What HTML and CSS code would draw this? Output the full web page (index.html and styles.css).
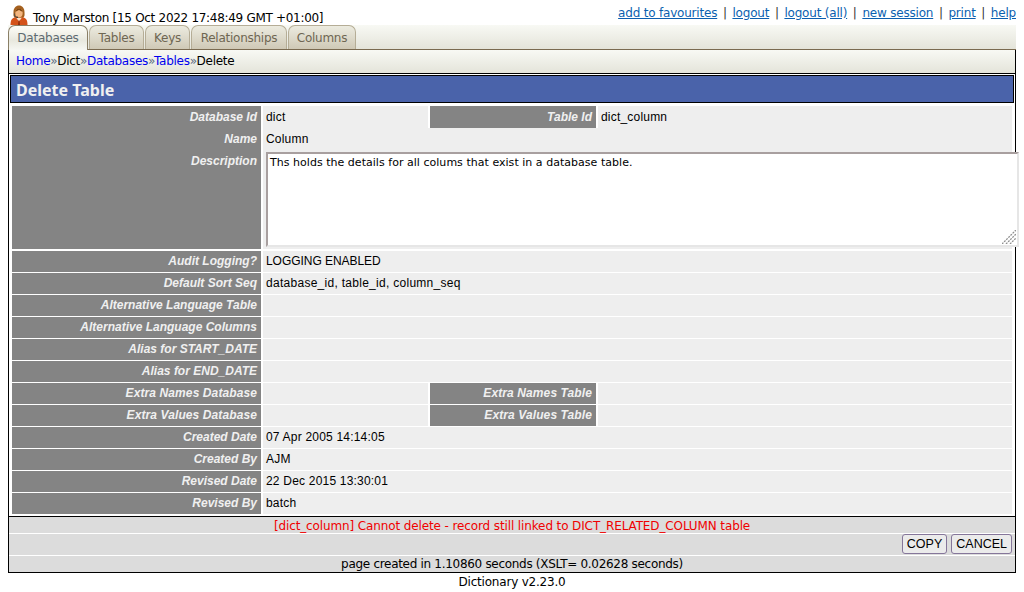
FILE: index.html
```html
<!DOCTYPE html>
<html lang="en">
<head>
<meta charset="utf-8">
<title>Delete Table</title>
<link rel="stylesheet" href="styles.css">
</head>
<body>
<header class="top">
  <div class="user">
    <svg class="avatar" width="18" height="20" viewBox="0 0 18 20">
      <path d="M0.5 20c0-2 .2-4.500 1.500-6 1.500-1.500 4-2.500 7-2.500s5.500 1 7 2.500c1.300 1.500 1.500 4 1.500 6z" fill="#d4531a"/>
      <path d="M6 12.500l3 4 3-4z" fill="#f7e3cc"/>
      <path d="M8.500 15.500h1l.5 4.500h-2z" fill="#8c2c0c"/>
      <path d="M3.500 7c0-4 2.500-6.500 5.500-6.500s5.500 2.500 5.500 6.500c0 2.500.5 4-1 5.500H4.500c-1.500-1.500-1-3-1-5.500z" fill="#a5611f"/>
      <ellipse cx="9" cy="8" rx="3.700" ry="4.300" fill="#f3b680"/>
      <path d="M5.300 7c.5-2.500 2-3.500 3.700-3.500 1.800 0 3.200 1 3.700 3.500-2-1.500-3-1.500-3.700-2-.8.500-2 .5-3.700 2z" fill="#7f4712"/>
      <path d="M4.500 8.500v2.500l2.500 1.500" fill="none" stroke="#55504a" stroke-width="1"/>
      <circle cx="7.300" cy="12.300" r=".8" fill="#35302c"/>
    </svg>
    <span class="user-text">Tony Marston [15 Oct 2022 17:48:49 GMT +01:00]</span>
  </div>
  <nav class="links">
    <a href="#">add to favourites</a><span class="sep">|</span><a href="#">logout</a><span class="sep">|</span><a href="#">logout (all)</a><span class="sep">|</span><a href="#">new session</a><span class="sep">|</span><a href="#">print</a><span class="sep">|</span><a href="#">help</a>
  </nav>
</header>
<nav class="tabs">
  <div class="tab tab-active">Databases</div>
  <div class="tab tab-tables">Tables</div>
  <div class="tab tab-keys">Keys</div>
  <div class="tab tab-rel">Relationships</div>
  <div class="tab tab-cols">Columns</div>
</nav>
<main class="frame">
  <div class="crumbs"><a href="#">Home</a><span class="arrow">»</span>Dict<span class="arrow">»</span><a href="#">Databases</a><span class="arrow">»</span><a href="#">Tables</a><span class="arrow">»</span>Delete</div>
  <h1 class="title">Delete Table</h1>
  <div class="form">
    <div class="row row-4 row-low"><div class="lab">Database Id</div><div class="val">dict</div><div class="lab">Table Id</div><div class="val">dict_column</div></div>
    <div class="row row-low"><div class="lab">Name</div><div class="val">Column</div></div>
    <div class="row row-tall row-low"><div class="lab">Description</div><div class="val val-area"><textarea class="area" readonly>Ths holds the details for all colums that exist in a database table.</textarea><svg class="grip" width="14" height="14" viewBox="0 0 14 14"><path d="M0 14L14 0M4 14L14 4M8 14L14 8" stroke="#8f8f8f" stroke-width="1.300" stroke-dasharray="2 1" fill="none"/></svg></div></div>
    <div class="row"><div class="lab">Audit Logging?</div><div class="val val-caps">LOGGING ENABLED</div></div>
    <div class="row"><div class="lab">Default Sort Seq</div><div class="val val-long">database_id, table_id, column_seq</div></div>
    <div class="row"><div class="lab">Alternative Language Table</div><div class="val"></div></div>
    <div class="row"><div class="lab">Alternative Language Columns</div><div class="val"></div></div>
    <div class="row"><div class="lab">Alias for START_DATE</div><div class="val"></div></div>
    <div class="row"><div class="lab">Alias for END_DATE</div><div class="val"></div></div>
    <div class="row row-4"><div class="lab lab-wide">Extra Names Database</div><div class="val"></div><div class="lab lab-wide">Extra Names Table</div><div class="val"></div></div>
    <div class="row row-4"><div class="lab lab-wide">Extra Values Database</div><div class="val"></div><div class="lab lab-wide">Extra Values Table</div><div class="val"></div></div>
    <div class="row"><div class="lab">Created Date</div><div class="val">07 Apr 2005 14:14:05</div></div>
    <div class="row"><div class="lab">Created By</div><div class="val">AJM</div></div>
    <div class="row"><div class="lab">Revised Date</div><div class="val">22 Dec 2015 13:30:01</div></div>
    <div class="row"><div class="lab">Revised By</div><div class="val">batch</div></div>
  </div>
  <div class="msg">[dict_column] Cannot delete - record still linked to DICT_RELATED_COLUMN table</div>
  <div class="actions"><button class="btn" type="button">COPY</button><button class="btn" type="button">CANCEL</button></div>
  <div class="timing">page created in 1.10860 seconds (XSLT= 0.02628 seconds)</div>
</main>
<footer class="foot">Dictionary v2.23.0</footer>
</body>
</html>
```
FILE: styles.css
```css
* { box-sizing: border-box; }
html, body { margin: 0; padding: 0; background: #fff; }
body {
  width: 1024px;
  height: 592px;
  overflow: hidden;
  font-family: "DejaVu Sans", Verdana, sans-serif;
  font-size: 12px;
  color: #000;
}
.top {
  height: 25px;
  padding: 5px 8px 0 10px;
  display: flex;
  justify-content: space-between;
}
.user { display: flex; align-items: flex-end; gap: 5px; height: 20px; }
.avatar { display: block; }
.user-text { line-height: 14px; letter-spacing: -0.3px; }
.links { display: flex; line-height: 14px; margin-top: 1px; letter-spacing: -0.2px; }
.links a { color: #0b5fb0; text-decoration: underline; }
.sep { margin: 0 5.700px; color: #333; }
.tabs {
  height: 25px;
  margin: 0 8px;
  display: flex;
  gap: 1px;
  background: linear-gradient(#f8f9f4, #e4e4da);
  border-bottom: 1px solid #7a6a50;
}
.tab {
  width: 80px;
  height: 24px;
  padding-top: 5px;
  text-align: center;
  line-height: 14px;
  letter-spacing: -0.25px;
  color: #6e6652;
  background: linear-gradient(#ecebe0, #cfc9b6);
  border: 1px solid #b5ad96;
  border-bottom: 0;
  border-radius: 7px 7px 0 0;
}
.tab-active {
  height: 25px;
  background: linear-gradient(#fdfdf8, #e8e8de 60%, #f6f7f2);
  border-color: #8a7f66;
  color: #5d6a70;
}
.tab-tables { width: 55px; }
.tab-keys { width: 45px; }
.tab-rel { width: 96px; }
.tab-cols { width: 68px; }
.frame {
  height: 523px;
  margin: 0 8px;
  border: 1px solid #000;
  border-top: 0;
  display: flex;
  flex-direction: column;
}
.crumbs {
  height: 24px;
  padding: 4px 7px 0;
  line-height: 14px;
  letter-spacing: -0.27px;
  background: linear-gradient(#f8f9f4, #e4e4da);
  border-bottom: 1px solid #000;
}
.crumbs a { color: #0000ee; text-decoration: none; }
.arrow { color: #5a6a80; }
.title {
  height: 28px;
  margin: 1px 1px 0;
  padding: 0 5px;
  border: 1px solid #000;
  background: #4a63aa;
  color: #f0f0f0;
  font-family: "Noto Sans", sans-serif;
  font-size: 16px;
  line-height: 28px;
  font-weight: bold;
}
.form {
  padding: 3px 3px 0;
  display: flex;
  flex-direction: column;
  gap: 2px;
  font-family: "Liberation Sans", Arial, sans-serif;
  font-size: 12px;
}
.row {
  display: grid;
  grid-template-columns: 249px 1fr;
  gap: 2px;
  height: 20px;
  line-height: 21px;
}
.row-low { line-height: 23px; }
.row-4 { grid-template-columns: 249px 165px 166px 1fr; }
.row-tall { height: 99px; }
.lab {
  background: #848484;
  color: #f0f0f0;
  font-weight: bold;
  font-style: italic;
  text-align: right;
  padding-right: 4px;
}
.lab-wide { letter-spacing: 0.1px; }
.val {
  background: #eeeeee;
  padding-left: 3px;
  letter-spacing: 0.2px;
  white-space: nowrap;
}
.val-caps { letter-spacing: -0.05px; }
.val-long { letter-spacing: 0.28px; }
.val-area { position: relative; }
.area {
  position: absolute;
  left: 3px;
  top: 2px;
  width: 753px;
  height: 95px;
  display: block;
  padding: 2px 2px;
  margin: 0;
  resize: none;
  overflow: hidden;
  background: #fff;
  border: 2px solid;
  border-color: #a89f9f #e6e6e6 #e6e6e6 #a89f9f;
  outline: none;
  font-family: "DejaVu Sans", Verdana, sans-serif;
  font-size: 11px;
  line-height: 13px;
  letter-spacing: 0.03px;
}
.grip {
  position: absolute;
  left: 739px;
  top: 80px;
}
.msg {
  height: 17px;
  margin-top: 3px;
  border-top: 1px solid #000;
  background: #dcdcdc;
  color: #f00000;
  text-align: center;
  line-height: 18px;
  letter-spacing: -0.12px;
}
.actions {
  height: 23px;
  border-top: 1px solid #fff;
  background: #dcdcdc;
  display: flex;
  justify-content: flex-end;
  align-items: flex-start;
  gap: 4px;
  padding-right: 3px;
}
.btn {
  height: 20px;
  padding: 0 4px;
  background: #ebebeb;
  border: 1px solid #85769a;
  border-radius: 3px;
  font-family: "Liberation Sans", Arial, sans-serif;
  font-size: 12.500px;
  color: #000;
}
.timing {
  flex: 1;
  border-top: 1px solid #fff;
  background: #dcdcdc;
  text-align: center;
  line-height: 16px;
  letter-spacing: -0.3px;
}
.foot {
  text-align: center;
  line-height: 18px;
  letter-spacing: -0.2px;
}
```
